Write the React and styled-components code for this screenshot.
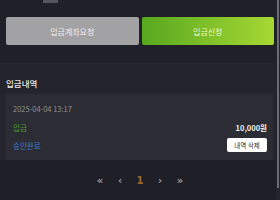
import React from 'react';
import styled, { createGlobalStyle } from 'styled-components';

const Global = createGlobalStyle`
  html, body { margin: 0; padding: 0; background: #1f2027; }
  body { font-family: "Noto Sans CJK KR", "Noto Sans", sans-serif; }
`;

const Page = styled.div`
  display: flex;
  width: 280px;
  height: 200px;
  overflow: hidden;
  background: #1f2027;
`;

const Main = styled.div`
  flex: 1;
  display: flex;
  flex-direction: column;
`;

const Scroll = styled.div`
  width: 4px;
  display: flex;
  justify-content: center;
  background: #24252c;
  div {
    width: 2px;
    height: 188px;
    background: #6a6b72;
  }
`;

const TopArea = styled.div`
  padding: 0 2px 0 6px;
  height: 63px;
  background: #202128;
`;

const Stub = styled.div`
  margin-left: 37px;
  width: 15px;
  height: 3px;
  background: #55565c;
`;

const ButtonRow = styled.div`
  display: flex;
  gap: 3px;
  margin-top: 14px;
`;

const BigButton = styled.button`
  flex: 1;
  height: 28px;
  border: none;
  border-radius: 2px;
  font-family: inherit;
  font-size: 8px;
  color: ${p => (p.$green ? '#e9f7c8' : '#eeeeef')};
  background: ${p => (p.$green ? 'linear-gradient(90deg, #57a81f, #a7d833)' : '#a2a2a5')};
  padding: 0;
`;

const History = styled.div`
  background: #24252c;
  padding: 14px 3px 0 6px;
`;

const Title = styled.div`
  font-size: 8.5px;
  font-weight: 500;
  color: #e6e6e8;
  line-height: 12px;
  height: 17px;
`;

const Card = styled.div`
  background: #2c2d34;
  padding: 9px 6px 9px 7px;
  display: flex;
  flex-direction: column;
  gap: 6px;
`;

const Line = styled.div`
  display: flex;
  justify-content: space-between;
  align-items: center;
  height: 12px;
  font-size: 7.5px;
`;

const Date = styled.div`
  font-size: 7.5px;
  color: #8e8f95;
  height: 12px;
  line-height: 12px;
`;

const Kind = styled.span`
  color: ${p => p.$color};
`;

const Amount = styled.span`
  color: #f2f2f2;
  font-weight: 700;
`;

const Delete = styled.button`
  border: none;
  background: #ffffff;
  color: #2a2a2e;
  border-radius: 2px;
  font-family: inherit;
  font-size: 6.5px;
  padding: 0;
  width: 40px;
  height: 14px;
`;

const Pager = styled.div`
  flex: 1;
  background: #1f2027;
  display: flex;
  justify-content: center;
  align-items: flex-start;
  gap: 12px;
  padding-top: 15px;
  padding-left: 4px;
`;

const PageItem = styled.span`
  width: 8px;
  line-height: 12px;
  text-align: center;
  font-size: 10px;
  font-weight: 700;
  color: ${p => (p.$active ? '#9a6a2c' : '#9b9ca2')};
  font-family: "DejaVu Sans", sans-serif;
`;

export default function App() {
  return (
    <Page>
      <Global />
      <Main>
        <TopArea>
          <Stub />
          <ButtonRow>
            <BigButton>입금계좌요청</BigButton>
            <BigButton $green>입금신청</BigButton>
          </ButtonRow>
        </TopArea>
        <History>
          <Title>입금내역</Title>
          <Card>
            <Date>2025-04-04 13:17</Date>
            <Line>
              <Kind $color="#4f9a2a">입금</Kind>
              <Amount>10,000원</Amount>
            </Line>
            <Line>
              <Kind $color="#3a78d8">승인완료</Kind>
              <Delete>내역 삭제</Delete>
            </Line>
          </Card>
        </History>
        <Pager>
          <PageItem>«</PageItem>
          <PageItem>‹</PageItem>
          <PageItem $active>1</PageItem>
          <PageItem>›</PageItem>
          <PageItem>»</PageItem>
        </Pager>
      </Main>
      <Scroll><div /></Scroll>
    </Page>
  );
}
